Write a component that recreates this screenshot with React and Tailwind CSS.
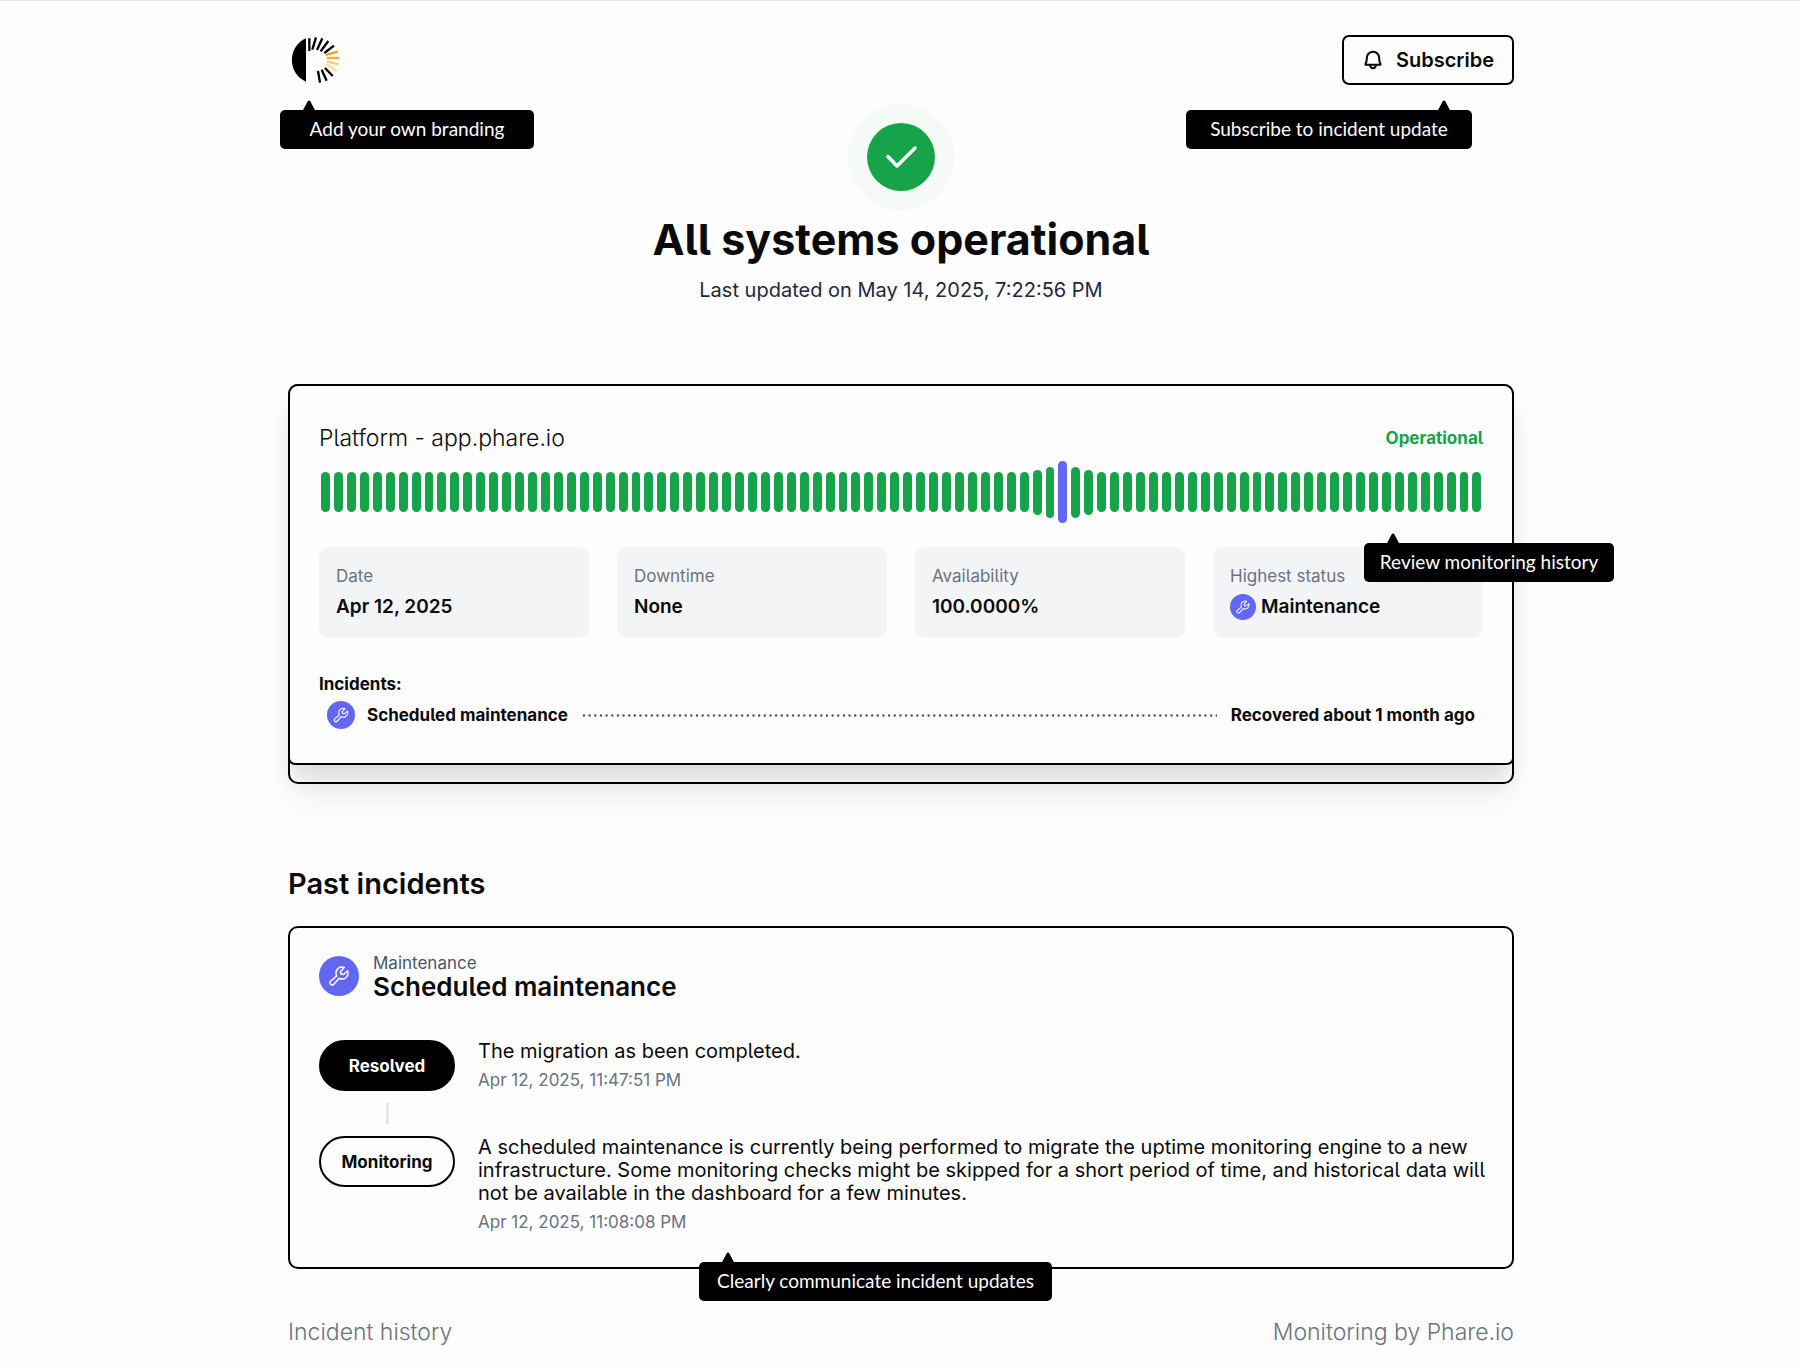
import { PiBellBold, PiWrench } from "react-icons/pi";

const BAR_COUNT = 90;
const ACTIVE_BAR = 57;

function barClass(index) {
  const distance = Math.abs(index - ACTIVE_BAR);
  if (distance === 0) return "h-[62px] bg-[#6366f1]";
  if (distance === 1) return "h-[51px] bg-[#16a34a]";
  if (distance === 2) return "h-[45px] bg-[#16a34a]";
  return "h-10 bg-[#16a34a]";
}

function Logo() {
  return (
    <svg viewBox="63 48 147 144" className="h-12 w-[49px]" aria-label="Phare" role="img">
      <path d="M108 55A71 71 0 0 0 108 185Z" fill="#000" />
      <g stroke="#000" strokeWidth="7" fill="none">
        <path d="M118 55V93M138 52L127 89M157 55L141 90M175 63L152 94M192 77L163 99" />
        <path d="M188 168L165 144M170 182L155 149M150 188L144 153" />
      </g>
      <g strokeWidth="7" fill="none">
        <path d="M203 95L167 105" stroke="#e5a117" />
        <path d="M208 114H171" stroke="#eeb62b" />
        <path d="M206 133L171 124" stroke="#f6cf62" />
        <path d="M200 153L168 133" stroke="#fae3a0" />
      </g>
    </svg>
  );
}

function Tip({ className, arrowClass, children }) {
  return (
    <div
      role="note"
      className={`absolute z-10 flex h-[39px] items-center justify-center rounded-[5px] bg-black pb-px font-[Lato,sans-serif] text-[19px] whitespace-nowrap text-white ${className}`}
    >
      <svg viewBox="0 0 14 12" className={`absolute -top-[10px] h-3 w-[14px] ${arrowClass}`} aria-hidden="true">
        <path d="M0 12L5.600 1.400Q7 -.6 8.400 1.400L14 12Z" fill="#000" />
      </svg>
      {children}
    </div>
  );
}

function WrenchBadge({ className, iconClass }) {
  return (
    <span className={`flex shrink-0 items-center justify-center rounded-full bg-[#6366f1] text-white ${className}`}>
      <PiWrench className={iconClass} aria-hidden="true" />
    </span>
  );
}

function Stat({ label, children }) {
  return (
    <div className="rounded-[10px] bg-gray-100 p-[17px]">
      <dt className="text-[17px] leading-6 text-[#6b7280]">{label}</dt>
      <dd className="mt-[5px] flex items-center gap-[5px] text-[19px] leading-7 font-semibold">{children}</dd>
    </div>
  );
}

function Update({ status, pillClass, date, children }) {
  return (
    <li className="flex items-start gap-[23px]">
      <span
        className={`flex h-[51px] w-[136px] shrink-0 items-center justify-center rounded-full border-2 border-black pt-0.5 text-[17px] font-bold ${pillClass}`}
      >
        {status}
      </span>
      <div className="-mr-3 min-w-0 flex-1">
        <p className="text-xl leading-[23px]">{children}</p>
        <time className="mt-[5px] block text-[17px] leading-6 text-[#6b7280]">{date}</time>
      </div>
    </li>
  );
}

export default function App() {
  return (
    <div className="min-h-screen border-t border-gray-200 bg-[#fdfdfd] pr-6 pl-[26px] font-[Inter,sans-serif] text-[#0a0a0a] [font-feature-settings:'cv05']">
      <div className="mx-auto max-w-[1226px]">
        <header className="flex items-start justify-between pt-[34px]">
          <div className="relative pt-px pl-[3px]">
            <Logo />
            <Tip className="top-[75px] -left-2 w-[254px]" arrowClass="left-[22px]">
              Add your own branding
            </Tip>
          </div>
          <div className="relative">
            <button
              type="button"
              className="flex h-[50px] items-center gap-3 rounded-[7px] border-2 border-black px-[18px] text-xl font-semibold"
            >
              <PiBellBold className="size-[22px]" aria-hidden="true" />
              Subscribe
            </button>
            <Tip className="top-[75px] right-[42px] w-[286px]" arrowClass="right-[21px]">
              Subscribe to incident update
            </Tip>
          </div>
        </header>

        <main>
          <section className="mt-[19px] flex flex-col items-center text-center">
            <div className="flex size-[106px] items-center justify-center rounded-full bg-[#f5faf7]">
              <div className="flex size-[68px] items-center justify-center rounded-full bg-[#16a34a]">
                <svg viewBox="0 0 34 34" className="size-[34px]" fill="none" stroke="#fff" strokeWidth="3.500" strokeLinecap="round" strokeLinejoin="round" aria-hidden="true">
                  <path d="M4 16.500L13 26L31 8" />
                </svg>
              </div>
            </div>
            <h1 className="mt-[5px] text-[43px] leading-[48px] font-bold">All systems operational</h1>
            <p className="mt-[13px] text-xl leading-7 text-slate-800">Last updated on May 14, 2025, 7:22:56 PM</p>
          </section>

          <section className="mt-20 rounded-[10px] border-2 border-black pb-[17px] shadow-[0_24px_30px_-6px_rgba(0,0,0,0.04)]">
            <div className="relative -mx-[2px] -mt-[2px] rounded-t-[10px] rounded-b-[7px] border-2 border-black bg-[#fdfdfd] px-[29px] pt-9 pb-[34px] shadow-[0_20px_25px_-5px_rgba(0,0,0,0.14)]">
              <div className="flex items-center justify-between">
                <h2 className="text-[23px] leading-8 font-light">Platform - app.phare.io</h2>
                <span className="pt-0.5 text-[17px] font-bold text-[#16a34a]">Operational</span>
              </div>
              <div className="mt-[7px] flex h-[62px] items-center" role="img" aria-label="Monitoring history, last 90 days">
                {Array.from({ length: BAR_COUNT }, (_, i) => (
                  <div key={i} className="flex-1 px-[2px]">
                    <div className={`rounded-full ${barClass(i)}`} />
                  </div>
                ))}
              </div>
              <Tip className="top-[157px] -right-[102px] w-[250px]" arrowClass="left-[22px]">
                Review monitoring history
              </Tip>
              <dl className="mt-6 grid grid-cols-4 gap-7">
                <Stat label="Date">Apr 12, 2025</Stat>
                <Stat label="Downtime">None</Stat>
                <Stat label="Availability">100.0000%</Stat>
                <Stat label="Highest status">
                  <WrenchBadge className="size-[26px]" iconClass="size-4" />
                  Maintenance
                </Stat>
              </dl>
              <h3 className="mt-[34px] text-[17px] leading-6 font-bold">Incidents:</h3>
              <div className="mt-1 flex h-[29px] items-center px-2 text-[17px] font-bold">
                <WrenchBadge className="size-7" iconClass="size-[18px]" />
                <span className="ml-3 pt-0.5">Scheduled maintenance</span>
                <svg className="mx-[14px] h-1 min-w-0 flex-1" aria-hidden="true">
                  <line x1="2" y1="2.500" x2="100%" y2="2.500" stroke="#4b5563" strokeWidth="2.500" strokeLinecap="round" strokeDasharray="0 5.650" />
                </svg>
                <span className="pt-0.5">Recovered about 1 month ago</span>
              </div>
            </div>
          </section>

          <h2 className="mt-[82px] text-[29px] leading-9 font-semibold">Past incidents</h2>

          <section className="relative mt-6 rounded-[10px] border-2 border-black px-[29px] pt-[25px] pb-[33px]">
            <div className="flex items-start gap-[14px]">
              <WrenchBadge className="mt-[3px] size-10" iconClass="size-6" />
              <div>
                <p className="text-[17px] leading-5 text-gray-600">Maintenance</p>
                <h3 className="text-[26px] leading-7 font-semibold">Scheduled maintenance</h3>
              </div>
            </div>
            <ol className="mt-[39px]">
              <Update status="Resolved" pillClass="bg-black text-white" date="Apr 12, 2025, 11:47:51 PM">
                The migration as been completed.
              </Update>
              <li aria-hidden="true" className="mt-[11px] mb-3 flex w-[136px] justify-center">
                <span className="h-[21px] w-[3px] bg-gray-200" />
              </li>
              <Update status="Monitoring" pillClass="" date="Apr 12, 2025, 11:08:08 PM">
                A scheduled maintenance is currently being performed to migrate the uptime monitoring engine to a new
                infrastructure. Some monitoring checks might be skipped for a short period of time, and historical data
                will not be available in the dashboard for a few minutes.
              </Update>
            </ol>
            <Tip className="-bottom-[34px] left-[409px] w-[353px]" arrowClass="left-[22px]">
              Clearly communicate incident updates
            </Tip>
          </section>
        </main>

        <footer className="mt-[47px] flex justify-between text-[23px] leading-8 font-light text-[#6b7280]">
          <a href="#history">Incident history</a>
          <a href="#phare">Monitoring by Phare.io</a>
        </footer>
      </div>
    </div>
  );
}
